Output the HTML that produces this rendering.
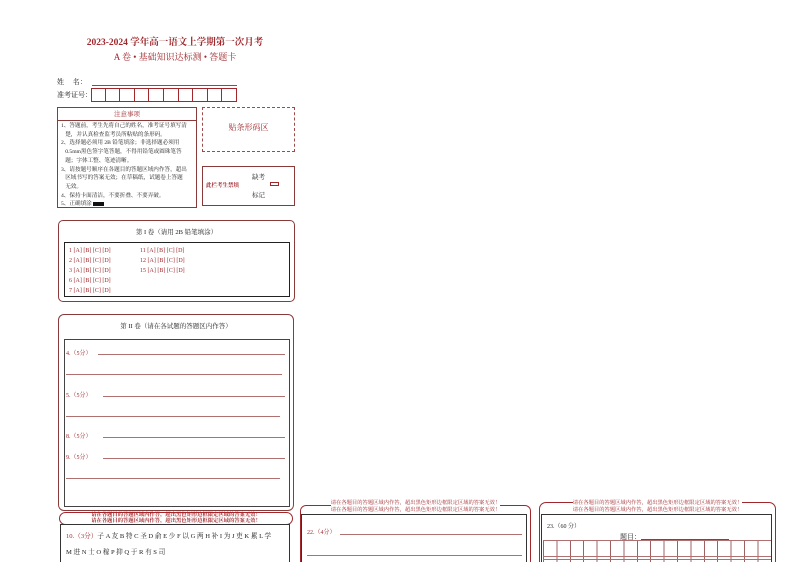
<!DOCTYPE html><html style="width:794px;height:562px;overflow:hidden"><head><meta charset="utf-8"><style>
*{margin:0;padding:0;box-sizing:border-box}
body{width:794px;height:562px;background:#fff;position:relative;overflow:hidden;font-family:"Liberation Serif","Noto Serif CJK SC",serif;color:#a0282d}
.a{position:absolute;white-space:nowrap}
.bx{position:absolute;border:1px solid #8b3a3a}
.k{color:#222}
.ln{position:absolute;height:1px;background:#b07070}
.s{font-size:6px}
</style></head><body>
<div class="a" style="left:0;width:350px;top:34px;text-align:center;font-size:9.5px;font-weight:bold;color:#a0282d">2023-2024 学年高一语文上学期第一次月考</div>
<div class="a" style="left:0;width:350px;top:50px;text-align:center;font-size:9px">A 卷 • 基础知识达标测 • 答题卡</div>
<div class="a k" style="left:57px;top:77px;font-size:7px">姓　&nbsp;名：</div>
<div class="ln" style="left:92px;top:85px;width:145px;background:#8b4a4a"></div>
<div class="a k" style="left:57px;top:90px;font-size:7px">准考证号：</div>
<div class="a" style="left:91px;top:88px;display:flex">
<div style="width:14.6px;height:14px;border:1px solid #a0282d"></div><div style="width:14.6px;height:14px;border:1px solid #a0282d;border-left:0"></div><div style="width:14.6px;height:14px;border:1px solid #a0282d;border-left:0"></div><div style="width:14.6px;height:14px;border:1px solid #a0282d;border-left:0"></div><div style="width:14.6px;height:14px;border:1px solid #a0282d;border-left:0"></div><div style="width:14.6px;height:14px;border:1px solid #a0282d;border-left:0"></div><div style="width:14.6px;height:14px;border:1px solid #a0282d;border-left:0"></div><div style="width:14.6px;height:14px;border:1px solid #a0282d;border-left:0"></div><div style="width:14.6px;height:14px;border:1px solid #a0282d;border-left:0"></div><div style="width:14.6px;height:14px;border:1px solid #a0282d;border-left:0"></div></div>
<div class="bx" style="left:57px;top:107px;width:140px;height:101px"></div>
<div class="ln" style="left:57px;top:120px;width:140px;background:#8b3a3a"></div>
<div class="a" style="left:57px;width:140px;top:109px;text-align:center;font-size:6.5px">注意事项</div>
<div class="a k" style="left:61px;top:122px;font-size:5.6px;line-height:8.7px;white-space:normal;width:134px">1、答题前，考生先将自己的姓名，准考证号填写清<br>&nbsp;&nbsp;&nbsp;楚，并认真检查监考员所粘贴的条形码。<br>2、选择题必须用 2B 铅笔填涂；非选择题必须用<br>&nbsp;&nbsp;&nbsp;0.5mm黑色签字笔答题，不得用铅笔或圆珠笔答<br>&nbsp;&nbsp;&nbsp;题；字体工整、笔迹清晰。<br>3、请按题号顺序在各题目的答题区域内作答，超出<br>&nbsp;&nbsp;&nbsp;区域书写的答案无效；在草稿纸，试题卷上答题<br>&nbsp;&nbsp;&nbsp;无效。<br>4、保持卡面清洁，不要折叠、不要弄破。<br>5、正确填涂 <span style="display:inline-block;width:11px;height:4px;background:#111;vertical-align:middle"></span></div>
<div class="a" style="left:202px;top:107px;width:93px;height:45px;border:1px dashed #a04a4a"></div>
<div class="a" style="left:202px;width:93px;top:122px;text-align:center;font-size:8px">贴条形码区</div>
<div class="bx" style="left:202px;top:166px;width:93px;height:40px"></div>
<div class="a k" style="left:252px;top:172px;font-size:6.5px">缺考</div>
<div class="a" style="left:206px;top:181px;font-size:5.5px;font-weight:bold">此栏考生禁填</div>
<div class="a" style="left:270px;top:182px;width:9px;height:4px;border:1px solid #a0282d"></div>
<div class="a k" style="left:252px;top:190px;font-size:6.5px">标记</div>
<div class="bx" style="left:58px;top:220px;width:237px;height:82px;border-radius:5px"></div>
<div class="a k" style="left:58px;width:237px;top:227px;text-align:center;font-size:6.5px">第 I 卷（请用 2B 铅笔填涂）</div>
<div class="a" style="left:64px;top:242px;width:226px;height:55px;border:1px solid #222"></div>
<div class="a s" style="left:69px;top:246px;line-height:10px">1 [A] [B] [C] [D]<br>2 [A] [B] [C] [D]<br>3 [A] [B] [C] [D]<br>6 [A] [B] [C] [D]<br>7 [A] [B] [C] [D]</div>
<div class="a s" style="left:140px;top:246px;line-height:10px">11 [A] [B] [C] [D]<br>12 [A] [B] [C] [D]<br>15 [A] [B] [C] [D]</div>
<div class="bx" style="left:58px;top:314px;width:236px;height:197px;border-radius:6px"></div>
<div class="a k" style="left:58px;width:236px;top:321px;text-align:center;font-size:6.5px">第 II 卷（请在各试题的答题区内作答）</div>
<div class="a" style="left:64px;top:339px;width:226px;height:168px;border:1px solid #444"></div>
<div class="a s" style="left:66px;top:348px">4.（5分）</div><div class="ln" style="left:98px;top:354px;width:187px"></div>
<div class="ln" style="left:66px;top:374px;width:216px"></div>
<div class="a s" style="left:66px;top:390px">5.（5分）</div><div class="ln" style="left:103px;top:396px;width:182px"></div>
<div class="ln" style="left:66px;top:416px;width:214px"></div>
<div class="a s" style="left:66px;top:431px">8.（5分）</div><div class="ln" style="left:103px;top:437px;width:182px"></div>
<div class="a s" style="left:66px;top:452px">9.（5分）</div><div class="ln" style="left:103px;top:458px;width:182px"></div>
<div class="ln" style="left:66px;top:478px;width:214px"></div>
<div class="a" style="left:59px;top:512px;width:234px;height:13px;border:1px solid #a0282d;border-radius:7px;background:#fff"></div>
<div class="a" style="left:59px;width:234px;top:512px;text-align:center;font-size:5.3px;line-height:6px;font-weight:bold">请在各题目的答题区域内作答，超出黑色矩形边框限定区域的答案无效！<br>请在各题目的答题区域内作答，超出黑色矩形边框限定区域的答案无效！</div>
<div class="a" style="left:60px;top:524px;width:230px;height:45px;border:1px solid #333"></div>
<div class="a" style="left:66px;top:530px;font-size:6.6px">10.（3分）<span class="k">子 A 友 B 特 C 圣 D 俞 E 少 F 以 G 两 H 补 I 为 J 吏 K 累 L 学</span></div>
<div class="a k" style="left:66px;top:546px;font-size:6.6px">M 进 N 士 O 稼 P 抑 Q 于 R 有 S 司</div>
<div class="a" style="left:300px;top:505px;width:231px;height:80px;border:1px solid #a0282d;border-radius:6px"></div>
<div class="a" style="left:300px;width:231px;top:500px;text-align:center;font-size:5.3px;line-height:6.5px"><span style="background:#fff">请在各题目的答题区域内作答，超出黑色矩形边框限定区域的答案无效！</span><br>请在各题目的答题区域内作答，超出黑色矩形边框限定区域的答案无效！</div>
<div class="a" style="left:301px;top:514px;width:226px;height:60px;border:1px solid #333"></div>
<div class="a" style="left:307px;top:527px;font-size:6px">22.（4分）</div><div class="ln" style="left:340px;top:534px;width:182px"></div>
<div class="ln" style="left:307px;top:555px;width:215px"></div>
<div class="a" style="left:539px;top:502px;width:237px;height:80px;border:1px solid #a0282d;border-radius:7px"></div>
<div class="a" style="left:539px;width:237px;top:500px;text-align:center;font-size:5.3px;line-height:6.5px"><span style="background:#fff">请在各题目的答题区域内作答，超出黑色矩形边框限定区域的答案无效！</span><br>请在各题目的答题区域内作答，超出黑色矩形边框限定区域的答案无效！</div>
<div class="a" style="left:541px;top:514px;width:231px;height:60px;border:1px solid #333"></div>
<div class="a k" style="left:547px;top:521px;font-size:6px">23.（60 分）</div>
<div class="a k" style="left:620px;top:532px;font-size:7px">题目：</div><div class="ln" style="left:641px;top:539px;width:88px;background:#555"></div>
<div class="a" style="left:543px;top:540px;width:228px;height:22px;background:repeating-linear-gradient(90deg,#a06060 0 1px,transparent 1px 13.4px)"></div>
<div class="ln" style="left:543px;top:540px;width:228px"></div>
<div class="ln" style="left:543px;top:556px;width:228px"></div>
<div class="ln" style="left:543px;top:559px;width:228px"></div>
</body></html>
